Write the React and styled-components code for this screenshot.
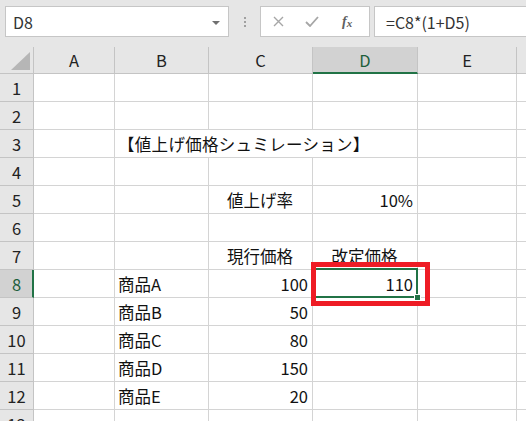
import React from 'react';
import styled, { createGlobalStyle } from 'styled-components';

const GREEN = '#217346';
const GRID = '#d4d4d4';
const HEAD_LINE = '#c4c4c4';

const GlobalStyle = createGlobalStyle`
  html, body {
    margin: 0;
    padding: 0;
    background: #ffffff;
    font-family: 'Noto Sans CJK JP', 'Noto Sans', sans-serif;
  }
`;

const columns = ['A', 'B', 'C', 'D', 'E', 'F'];

const rows = {
  3: { B: { text: '【値上げ価格シュミレーション】', span: 3, wide: true } },
  5: { C: { text: '値上げ率', align: 'center' }, D: { text: '10%', align: 'right' } },
  7: { C: { text: '現行価格', align: 'center' }, D: { text: '改定価格', align: 'center' } },
  8: { B: { text: '商品A' }, C: { text: '100', align: 'right' }, D: { text: '110', align: 'right', selected: true } },
  9: { B: { text: '商品B' }, C: { text: '50', align: 'right' } },
  10: { B: { text: '商品C' }, C: { text: '80', align: 'right' } },
  11: { B: { text: '商品D' }, C: { text: '150', align: 'right' } },
  12: { B: { text: '商品E' }, C: { text: '20', align: 'right' } },
};

const App = () => {
  const cells = [];
  for (let r = 1; r <= 13; r++) {
    const data = rows[r] || {};
    cells.push(
      <RowHead key={`h${r}`} $active={r === 8}>
        {r}
      </RowHead>
    );
    let skip = 0;
    columns.forEach((col) => {
      if (skip > 0) {
        skip--;
        return;
      }
      const cell = data[col];
      if (cell?.span) skip = cell.span - 1;
      cells.push(
        <Cell
          key={`${col}${r}`}
          $align={cell?.align}
          $span={cell?.span}
          $wide={cell?.wide}
          $selected={cell?.selected}
        >
          {cell?.text}
          {cell?.selected && <FillHandle />}
        </Cell>
      );
    });
  }

  return (
    <Window>
      <GlobalStyle />
      <Toolbar>
        <NameBox>
          D8
          <DropArrow />
        </NameBox>
        <Grip>
          <span />
          <span />
          <span />
        </Grip>
        <ButtonBox>
          <svg width="11" height="11" viewBox="0 0 11 11">
            <path d="M1 1 L10 10 M10 1 L1 10" stroke="#a6a6a6" strokeWidth="1.4" fill="none" />
          </svg>
          <svg width="14" height="11" viewBox="0 0 14 11">
            <path d="M1 6 L5 10 L13 1" stroke="#a6a6a6" strokeWidth="1.8" fill="none" />
          </svg>
          <FxLabel>
            f<sub>x</sub>
          </FxLabel>
        </ButtonBox>
        <FormulaBox>=C8*(1+D5)</FormulaBox>
      </Toolbar>
      <Sheet>
        <Corner>
          <CornerTriangle />
        </Corner>
        {columns.map((col) => (
          <ColHead key={col} $active={col === 'D'}>
            {col === 'F' ? '' : col}
          </ColHead>
        ))}
        {cells}
      </Sheet>
      <Annotation />
    </Window>
  );
};

export default App;

const Window = styled.div`
  position: relative;
  width: 526px;
  height: 421px;
  overflow: hidden;
  background: #ffffff;
  color: #111;
`;

const Toolbar = styled.div`
  height: 47px;
  box-sizing: border-box;
  background: #e6e6e6;
  display: flex;
  align-items: flex-start;
  padding: 6px 0 0 5px;
  white-space: nowrap;
`;

const Box = styled.div`
  height: 31px;
  box-sizing: border-box;
  background: #ffffff;
  border: 1px solid #c6c6c6;
  display: flex;
  align-items: center;
  font-size: 16px;
  color: #333;
`;

const NameBox = styled(Box)`
  width: 224px;
  padding: 0 8px 0 7px;
  justify-content: space-between;
`;

const DropArrow = styled.span`
  width: 0;
  height: 0;
  border-left: 4px solid transparent;
  border-right: 4px solid transparent;
  border-top: 4px solid #707070;
  margin-top: 2px;
`;

const Grip = styled.div`
  width: 31px;
  height: 31px;
  display: flex;
  flex-direction: column;
  align-items: center;
  justify-content: center;
  gap: 2px;

  span {
    width: 2px;
    height: 2px;
    background: #a0a0a0;
  }
`;

const ButtonBox = styled(Box)`
  width: 110px;
  padding: 0 0 0 12px;

  svg:first-child {
    margin-right: 21px;
  }
  svg:nth-child(2) {
    margin-right: 23px;
  }
`;

const FxLabel = styled.span`
  font-family: 'Liberation Serif', serif;
  font-style: italic;
  font-weight: bold;
  font-size: 14px;
  color: #606060;

  sub {
    font-size: 11px;
    vertical-align: -1px;
  }
`;

const FormulaBox = styled(Box)`
  margin-left: 4px;
  flex: 1;
  margin-right: -10px;
  padding-left: 11px;
`;

const Sheet = styled.div`
  display: grid;
  grid-template-columns: 34px 81px 94px 104px 105px 99px 100px;
  grid-template-rows: 27px repeat(13, 28px);
  font-size: 16.5px;
`;

const Corner = styled.div`
  position: relative;
  background: #e6e6e6;
  border-right: 1px solid ${HEAD_LINE};
  border-bottom: 1px solid ${HEAD_LINE};
`;

const CornerTriangle = styled.div`
  position: absolute;
  right: 3px;
  bottom: 3px;
  width: 19px;
  height: 18px;
  background: #b6b6b6;
  clip-path: polygon(100% 0, 100% 100%, 0 100%);
`;

const ColHead = styled.div`
  box-sizing: border-box;
  display: flex;
  align-items: center;
  justify-content: center;
  background: ${({ $active }) => ($active ? '#d2d2d2' : '#e6e6e6')};
  border-right: 1px solid ${HEAD_LINE};
  border-bottom: ${({ $active }) => ($active ? `2px solid ${GREEN}` : `1px solid ${HEAD_LINE}`)};
  color: ${({ $active }) => ($active ? '#1d5f3a' : '#222')};
  padding-top: ${({ $active }) => ($active ? '1px' : '0')};
`;

const RowHead = styled.div`
  box-sizing: border-box;
  display: flex;
  align-items: center;
  justify-content: center;
  background: ${({ $active }) => ($active ? '#d2d2d2' : '#e6e6e6')};
  border-right: ${({ $active }) => ($active ? `2px solid ${GREEN}` : `1px solid ${HEAD_LINE}`)};
  border-bottom: 1px solid ${HEAD_LINE};
  color: ${({ $active }) => ($active ? '#1d5f3a' : '#222')};
  padding-left: ${({ $active }) => ($active ? '1px' : '0')};
`;

const Cell = styled.div`
  position: relative;
  box-sizing: border-box;
  display: flex;
  align-items: center;
  justify-content: ${({ $align }) =>
    $align === 'right' ? 'flex-end' : $align === 'center' ? 'center' : 'flex-start'};
  padding: 0 4px 0 3px;
  border-right: 1px solid ${GRID};
  border-bottom: 1px solid ${GRID};
  white-space: nowrap;
  color: #111;
  letter-spacing: ${({ $wide }) => ($wide ? '0.3px' : '0')};
  grid-column: ${({ $span }) => ($span ? `span ${$span}` : 'auto')};

  ${({ $selected }) =>
    $selected &&
    `
    &::after {
      content: '';
      position: absolute;
      left: -2px;
      top: -2px;
      right: -1px;
      bottom: -1px;
      border: 2px solid ${GREEN};
      pointer-events: none;
    }
  `}
`;

const FillHandle = styled.span`
  position: absolute;
  right: -4px;
  bottom: -4px;
  width: 5px;
  height: 5px;
  background: ${GREEN};
  border: 1px solid #ffffff;
  z-index: 2;
`;

const Annotation = styled.div`
  position: absolute;
  left: 311px;
  top: 262px;
  width: 119px;
  height: 44px;
  box-sizing: border-box;
  border: 5px solid #ee1c25;
  pointer-events: none;
`;
